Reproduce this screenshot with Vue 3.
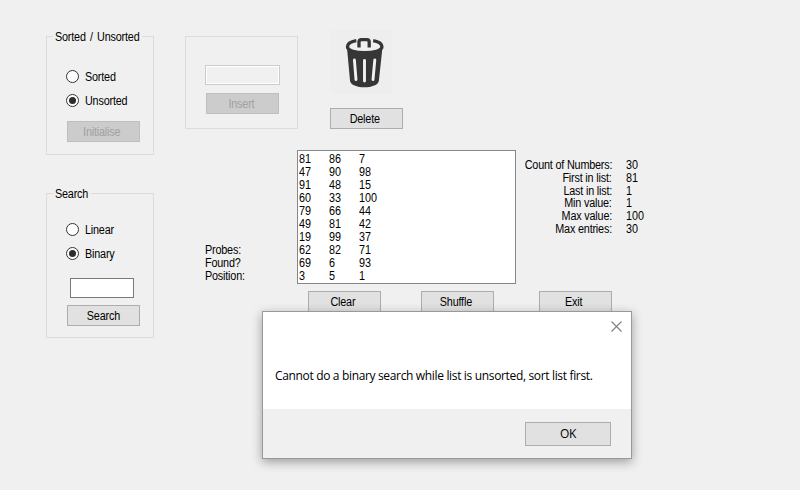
<script setup>
import { ref } from 'vue'

const order = ref('Unsorted')
const method = ref('Binary')
const rows = [
  [81, 86, 7], [47, 90, 98], [91, 48, 15], [60, 33, 100], [79, 66, 44],
  [49, 81, 42], [19, 99, 37], [62, 82, 71], [69, 6, 93], [3, 5, 1],
]
const results = ['Probes:', 'Found?', 'Position:']
const stats = [
  ['Count of Numbers:', 30], ['First in list:', 81], ['Last in list:', 1],
  ['Min value:', 1], ['Max value:', 100], ['Max entries:', 30],
]
const actions = ['Clear', 'Shuffle', 'Exit']
</script>

<template>
  <div class="window">
    <div class="side">
      <section class="group order">
        <h2 class="legend wide"><span class="t">Sorted / Unsorted</span></h2>
        <label v-for="o in ['Sorted', 'Unsorted']" :key="o" class="option" @click="order = o">
          <i class="radio" :class="{ on: order === o }"></i><span class="t">{{ o }}</span>
        </label>
        <button class="btn off" disabled><span class="t">Initialise</span></button>
      </section>
      <section class="group search">
        <h2 class="legend narrow"><span class="t">Search</span></h2>
        <label v-for="m in ['Linear', 'Binary']" :key="m" class="option" @click="method = m">
          <i class="radio" :class="{ on: method === m }"></i><span class="t">{{ m }}</span>
        </label>
        <input class="field" type="text" />
        <button class="btn"><span class="t">Search</span></button>
      </section>
    </div>

    <div class="main">
      <div class="top">
        <section class="group insert">
          <input class="field disabled" type="text" disabled />
          <button class="btn off" disabled><span class="t">Insert</span></button>
        </section>
        <div class="delete">
          <div class="bin">
            <svg width="61" height="64" viewBox="0 0 61 64">
              <path d="M16.2 20 L19 50.5 C19.4 59.6 47.5 59.6 47.9 50.5 L51.2 20Z" fill="#363636" />
              <ellipse cx="33.7" cy="16.6" rx="17" ry="5.6" fill="#f0f0f0" />
              <path d="M25.3 10.6 C19 11.7 16.5 14 16.5 16.8 C16.5 24.8 50.9 24.8 50.9 16.8 C50.9 14 48.4 11.7 42.2 10.6" stroke="#363636" stroke-width="3.4" fill="none" />
              <path d="M28 17.4 V12 Q28 9.6 30.4 9.6 H35.8 Q38.2 9.6 38.2 12 V17.4" stroke="#363636" stroke-width="3.3" fill="none" />
              <path d="M23.4 30 L25 49.6 M33.5 30.5 V51 M43.8 30 L42 49.6" stroke="#f2f2f2" stroke-width="2.9" stroke-linecap="round" fill="none" />
            </svg>
          </div>
          <button class="btn"><span class="t">Delete</span></button>
        </div>
      </div>

      <div class="middle">
        <div class="results">
          <div v-for="r in results" :key="r" class="line"><span class="t left">{{ r }}</span></div>
        </div>
        <div class="list">
          <div v-for="(row, i) in rows" :key="i" class="row">
            <span v-for="(n, j) in row" :key="j" class="cell"><span class="t num">{{ n }}</span></span>
          </div>
        </div>
        <div class="stats">
          <div v-for="s in stats" :key="s[0]" class="stat">
            <span class="name"><span class="t right">{{ s[0] }}</span></span>
            <span class="t num">{{ s[1] }}</span>
          </div>
        </div>
      </div>

      <div class="actions">
        <button v-for="a in actions" :key="a" class="btn"><span class="t">{{ a }}</span></button>
      </div>
    </div>

    <div class="dialog" role="dialog">
      <div class="content">
        <svg class="close" width="11" height="11" viewBox="0 0 11 11">
          <path d="M.5 .5 L10.5 10.5 M10.5 .5 L.5 10.5" stroke="#808080" stroke-width="1.1" />
        </svg>
        <p class="message">Cannot do a binary search while list is unsorted, sort list first.</p>
      </div>
      <div class="footer"><button class="btn ok">OK</button></div>
    </div>
  </div>
</template>

<style>
body { background: #f0f0f0; }
</style>

<style scoped>
* { box-sizing: border-box; }
.window {
  position: relative; width: 800px; height: 490px; overflow: hidden;
  display: flex; gap: 31px; padding: 36px 0 0 46px;
  background: #f0f0f0; color: #000;
  font: 12px/13px "Liberation Sans", Arial, sans-serif;
}
.t { display: inline-block; white-space: nowrap; letter-spacing: -0.2px; transform: scaleX(.9); }
.num, .left, .option .t, .legend .t { transform-origin: 0 50%; }
.num { letter-spacing: 0; }
.right { transform-origin: 100% 50%; }

.side { width: 108px; display: flex; flex-direction: column; gap: 38px; }
.group { border: 1px solid #dcdcdc; display: flex; flex-direction: column; }
.legend { margin: -7px 0 0 6px; padding-left: 2px; height: 14px; background: #f0f0f0; font: inherit; line-height: 14px; }
.wide { width: 89px; word-spacing: 1.6px; }
.narrow { width: 38px; }
.order { height: 119px; }
.search { height: 145px; }
.option { display: flex; align-items: center; gap: 6px; height: 13px; margin: 0 0 11px 19px; }
.option .t { padding-top: 2px; }
.legend + .option { margin-top: 26px; }
.search .legend + .option { margin-top: 22px; }
.radio {
  width: 13px; height: 13px; border: 1px solid #333; border-radius: 50%; background: #fff;
  display: flex; align-items: center; justify-content: center;
}
.radio.on::after { content: ""; width: 7px; height: 7px; border-radius: 50%; background: #2d2d2d; }
.btn {
  width: 73px; height: 21px; padding: 1px 3px 0 0; border: 1px solid #adadad; background: #e1e1e1;
  color: #000; font: inherit; line-height: 19px; text-align: center; flex: none;
}
.off { background: #ccc; border-color: #bfbfbf; color: #a0a0a0; }
.order .btn { margin: 3px 0 0 20px; }
.field { border: 1px solid #7a7a7a; background: #fff; height: 20px; padding: 2px; font: inherit; border-radius: 0; }
.search .field { width: 64px; margin: 7px 0 7px 23px; }
.search .btn { margin-left: 20px; padding-right: 1px; }

.main { display: flex; flex-direction: column; }
.top { display: flex; height: 114px; gap: 32px; }
.insert { width: 113px; height: 93px; padding: 28px 0 0 19px; gap: 8px; }
.field.disabled { width: 75px; border-color: #ccc; background: #f0f0f0; box-shadow: inset 0 0 0 1px #fff; }
.insert .btn { margin-left: 1px; }
.delete { display: flex; flex-direction: column; gap: 14px; margin-top: -6px; }
.bin { width: 61px; height: 64px; margin-left: 1px; background: #eee; }
.bin svg { display: block; }

.middle { display: flex; height: 134px; }
.results { width: 112px; padding: 94px 0 0 20px; }
.line { height: 13px; }
.list { width: 219px; height: 134px; border: 1px solid #828790; background: #fff; padding: 2px 1px; }
.row { display: flex; height: 13px; }
.cell { width: 30px; }
.stats { padding-top: 9px; width: 150px; }
.stat { display: flex; gap: 14px; height: 12.8px; }
.name { width: 96px; display: flex; justify-content: flex-end; }
.actions { display: flex; padding: 7px 0 0 123px; }
.actions .btn:nth-child(1) { margin-right: 40px; }
.actions .btn:nth-child(2) { margin-right: 45px; }

.dialog {
  position: absolute; left: 262px; top: 311px; width: 370px; height: 148px;
  border: 1px solid #999; background: #f0f0f0; display: flex; flex-direction: column;
  box-shadow: 0 3px 10px rgba(0, 0, 0, .35);
}
.content { height: 97px; background: #fff; display: flex; flex-direction: column; padding: 9px 9px 0 12px; }
.close { align-self: flex-end; }
.message {
  margin: 35px 0 0; white-space: nowrap; letter-spacing: -.34px;
  font: 12px/17px "Open Sans", "Noto Sans", sans-serif;
}
.footer { flex: 1; display: flex; justify-content: flex-end; padding: 13px 20px 0 0; }
.ok { width: 86px; height: 24px; padding: 0; font: 12px/22px "Open Sans", "Noto Sans", sans-serif; letter-spacing: -.3px; }
</style>
